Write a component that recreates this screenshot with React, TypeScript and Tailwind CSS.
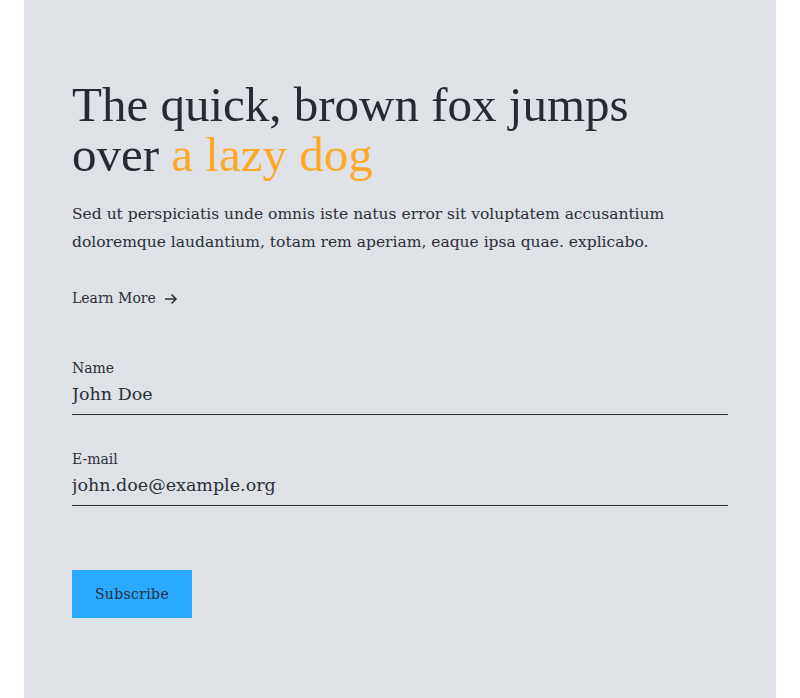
import React from "react";

const serif = "font-['Liberation_Serif','DejaVu_Serif',serif]";
const body = "font-['DejaVu_Serif','Liberation_Serif',serif]";

function Field({ label, value }: { label: string; value: string }) {
  return (
    <label className="block">
      <span className="block text-[14px] leading-5 text-[#2b3038]">{label}</span>
      <input
        defaultValue={value}
        className={`mt-1 block w-full border-b border-[#2b3038] bg-transparent pb-2 text-[17.5px] leading-6 text-[#2b3038] outline-none ${body}`}
      />
    </label>
  );
}

export default function App() {
  return (
    <div className={`min-h-[698px] bg-white px-6 ${body}`}>
      <section className="min-h-[698px] bg-[#dee1e6] px-12 pt-[80px] pb-20">
        <h1 className={`text-[49px] leading-[50px] text-[#262b33] ${serif}`}>
          The quick, brown fox jumps
          <br />
          over <span className="text-[#ffa726]">a lazy dog</span>
        </h1>
        <p className="mt-5 text-[15.5px] leading-7 text-[#2b3038]">
          Sed ut perspiciatis unde omnis iste natus error sit voluptatem accusantium
          <br />
          doloremque laudantium, totam rem aperiam, eaque ipsa quae. explicabo.
        </p>
        <a href="#" className="mt-8 inline-flex items-center gap-2 text-[14px] text-[#2b3038]">
          Learn More
          <svg width="14" height="14" viewBox="0 0 14 14" fill="none" stroke="currentColor" strokeWidth="1.5">
            <path d="M1 7h11M7.5 2.5 12 7l-4.5 4.5" />
          </svg>
        </a>
        <form className="mt-12 flex flex-col gap-[34px]">
          <Field label="Name" value="John Doe" />
          <Field label="E-mail" value="john.doe@example.org" />
          <div className="pt-[30px]">
            <button type="button" className="h-12 w-[120px] bg-[#29a9ff] text-[14px] tracking-wide text-[#2b3038]">
              Subscribe
            </button>
          </div>
        </form>
      </section>
    </div>
  );
}
